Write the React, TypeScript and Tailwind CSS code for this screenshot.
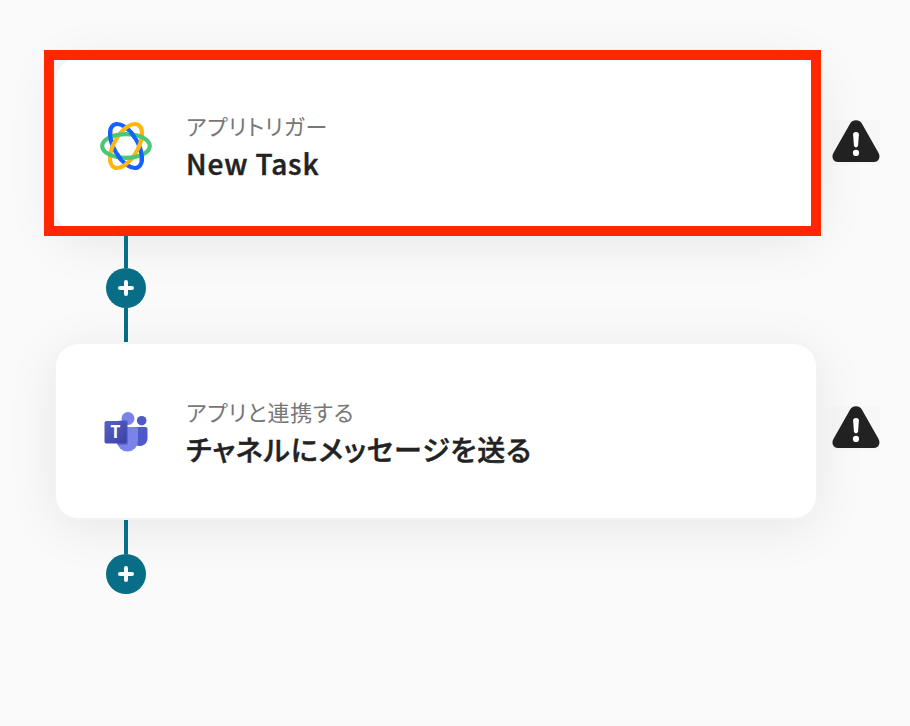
import React from "react";

interface StepProps {
  label: string;
  title: string;
  icon: React.ReactNode;
  highlighted?: boolean;
}

function OrbitLogo() {
  return (
    <svg width="54" height="54" viewBox="0 0 54 54" fill="none" strokeWidth="4.2">
      <ellipse cx="27" cy="27" rx="24.4" ry="11.9" stroke="#1463ff" transform="rotate(60 27 27)" />
      <ellipse cx="27" cy="27" rx="24.4" ry="11.9" stroke="#ffb70f" transform="rotate(-60 27 27)" />
      <ellipse cx="27" cy="27" rx="23.8" ry="11.9" stroke="#4cc776" />
      {/* the blue ring passes over the green one */}
      <g stroke="#1463ff" transform="rotate(60 27 27)">
        <path d="M48 21A24.4 11.9 0 0 0 38 16.4" />
        <path d="M6 33A24.4 11.9 0 0 0 16 37.6" />
        <path d="M37.4 37.8A24.4 11.9 0 0 1 29.5 38.8" />
        <path d="M16.6 16.2A24.4 11.9 0 0 1 24.5 15.2" />
      </g>
    </svg>
  );
}

function TeamsLogo() {
  return (
    <svg width="44" height="40" viewBox="0 0 44 40">
      <circle cx="37.7" cy="8.7" r="4.8" fill="#5059c9" />
      <path d="M30 15h11.5a2 2 0 0 1 2 2v9.4a7.8 7.8 0 0 1-13.5 5z" fill="#5059c9" />
      <circle cx="24" cy="6.5" r="6.5" fill="#7b83eb" />
      <path d="M13 15h19a2 2 0 0 1 2 2v12a10.5 10.5 0 0 1-21 0z" fill="#7b83eb" />
      <path d="M18 8h4a2 2 0 0 1 2 2v21a2 2 0 0 1-2 2h-8.5a11 11 0 0 1-.5-3V9z" fill="#464da8" opacity=".5" />
      <rect x="0.5" y="9" width="22.3" height="22.5" rx="2" fill="url(#teams)" />
      <text
        x="11.5"
        y="26"
        textAnchor="middle"
        fill="#fff"
        className="font-['Open_Sans',sans-serif] text-[17px] font-bold"
      >
        T
      </text>
      <defs>
        <linearGradient id="teams" x1="0" y1="0" x2="1" y2="1">
          <stop stopColor="#5a62c3" />
          <stop offset="1" stopColor="#3940ab" />
        </linearGradient>
      </defs>
    </svg>
  );
}

function WarningIcon() {
  return (
    <svg width="48" height="45" viewBox="0 0 48 45" className="bg-[#f7f7f7]">
      <path
        d="M18.3 3.2Q20.2 0.2 24 0.2t5.7 3L46.3 32.6Q48.2 36.2 46.9 39t-5 3H6q-3.7 0-5-3t.7-6.4z"
        fill="#222"
      />
      <path d="M21.1 14.5q0-2.5 2.9-2.5t2.9 2.5l-.8 10.8q-.2 2.1-2.1 2.1t-2.1-2.1z" fill="#fff" />
      <circle cx="24" cy="32.9" r="3.1" fill="#fff" />
    </svg>
  );
}

function Step({ label, title, icon, highlighted }: StepProps) {
  return (
    <div className="flex items-center gap-[16px]">
      <div className="relative flex h-[174px] w-[760px] items-center rounded-[22px] bg-white shadow-[0_0_0_2px_#f3f3f3,0_8px_52px_rgba(0,0,0,0.085)]">
        <div className="flex w-[130px] justify-center pt-[2px] pl-[9px]">{icon}</div>
        <div className="pt-[2px]">
          <p className="text-[22px] leading-[34px] tracking-[0.037em] text-[#777]">{label}</p>
          <p className="text-[28px] leading-[42px] font-medium tracking-[0.031em] text-[#222] [-webkit-text-stroke:0.5px_#222]">
            {title}
          </p>
        </div>
        {highlighted && (
          <div className="absolute -top-[8px] -left-[12px] z-10 h-[186px] w-[777px] border-[10px] border-[#ff2600]" />
        )}
      </div>
      <div className="pb-[5px]">
        <WarningIcon />
      </div>
    </div>
  );
}

function AddStep() {
  return (
    <div className="relative ml-[50px] flex w-[40px] flex-col items-center pt-[2px]">
      <div className="h-[34px] w-[4px] bg-[#086d87]" />
      <button className="flex size-[40px] items-center justify-center rounded-full bg-[#086d87]">
        <svg width="16" height="16" viewBox="0 0 16 16" stroke="#fff" strokeWidth="4" strokeLinecap="round">
          <path d="M8 2v12M2 8h12" />
        </svg>
      </button>
    </div>
  );
}

export default function App() {
  return (
    <div className="h-[726px] w-[910px] overflow-hidden bg-[#fafafa] pt-[58px] pl-[56px] font-['Noto_Sans_CJK_JP',sans-serif] [font-feature-settings:'palt']">
      <Step label="アプリトリガー" title="New Task" icon={<OrbitLogo />} highlighted />
      <div>
        <AddStep />
        <div className="relative ml-[68px] h-[34px] w-[4px] bg-[#086d87]" />
      </div>
      <div className="pt-[2px]">
        <Step label="アプリと連携する" title="チャネルにメッセージを送る" icon={<TeamsLogo />} />
      </div>
      <AddStep />
    </div>
  );
}
